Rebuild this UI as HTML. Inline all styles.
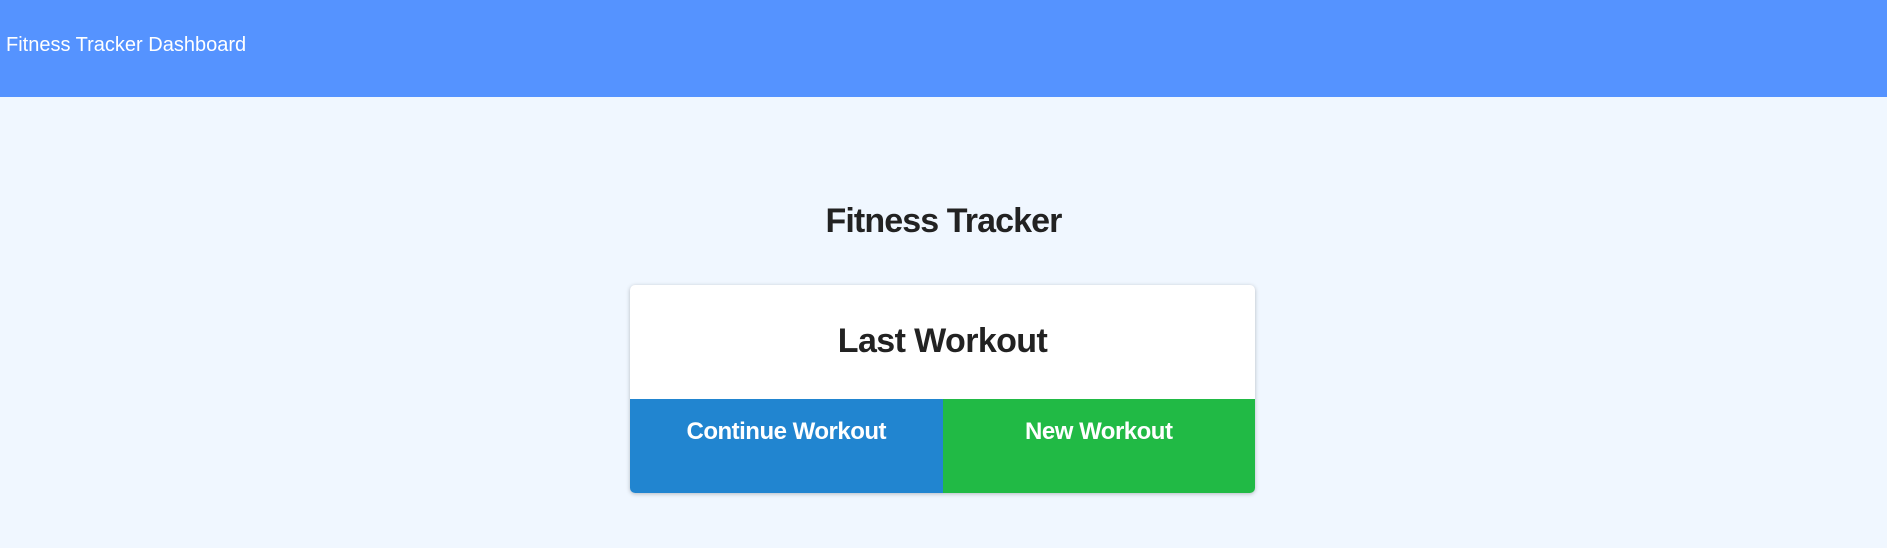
<!DOCTYPE html>
<html><head><meta charset="utf-8"><style>
html,body{margin:0;padding:0;width:1887px;height:548px;overflow:hidden;background:#F0F7FF;font-family:"Liberation Sans",sans-serif;}
.hdr{position:absolute;left:0;top:0;width:1887px;height:97px;background:#5593FF;}
.hdr span{position:absolute;left:6px;top:34px;color:#fff;font-size:20px;line-height:22px;}
.title{position:absolute;left:0;width:1887px;top:203px;text-align:center;font-size:34px;font-weight:bold;color:#222;letter-spacing:-0.9px;line-height:36px;}
.card{position:absolute;left:630px;top:285px;width:625px;height:208px;background:#fff;border-radius:5px;box-shadow:0 1px 4px rgba(0,0,0,.25);overflow:hidden;}
.card h2{margin:0;position:absolute;top:36px;width:100%;text-align:center;font-size:34px;font-weight:bold;color:#222;letter-spacing:-0.6px;line-height:40px;}
.b{position:absolute;top:114px;height:94px;width:312.5px;color:#fff;font-weight:bold;font-size:24px;text-align:center;padding-top:19px;box-sizing:border-box;letter-spacing:-0.5px;}
.b1{left:0;background:#2185D0;}
.b2{left:312.5px;background:#21BA45;}
</style></head><body>
<div class="hdr"><span>Fitness Tracker Dashboard</span></div>
<div class="title">Fitness Tracker</div>
<div class="card"><h2>Last Workout</h2>
<div class="b b1">Continue Workout</div><div class="b b2">New Workout</div></div>
</body></html>
